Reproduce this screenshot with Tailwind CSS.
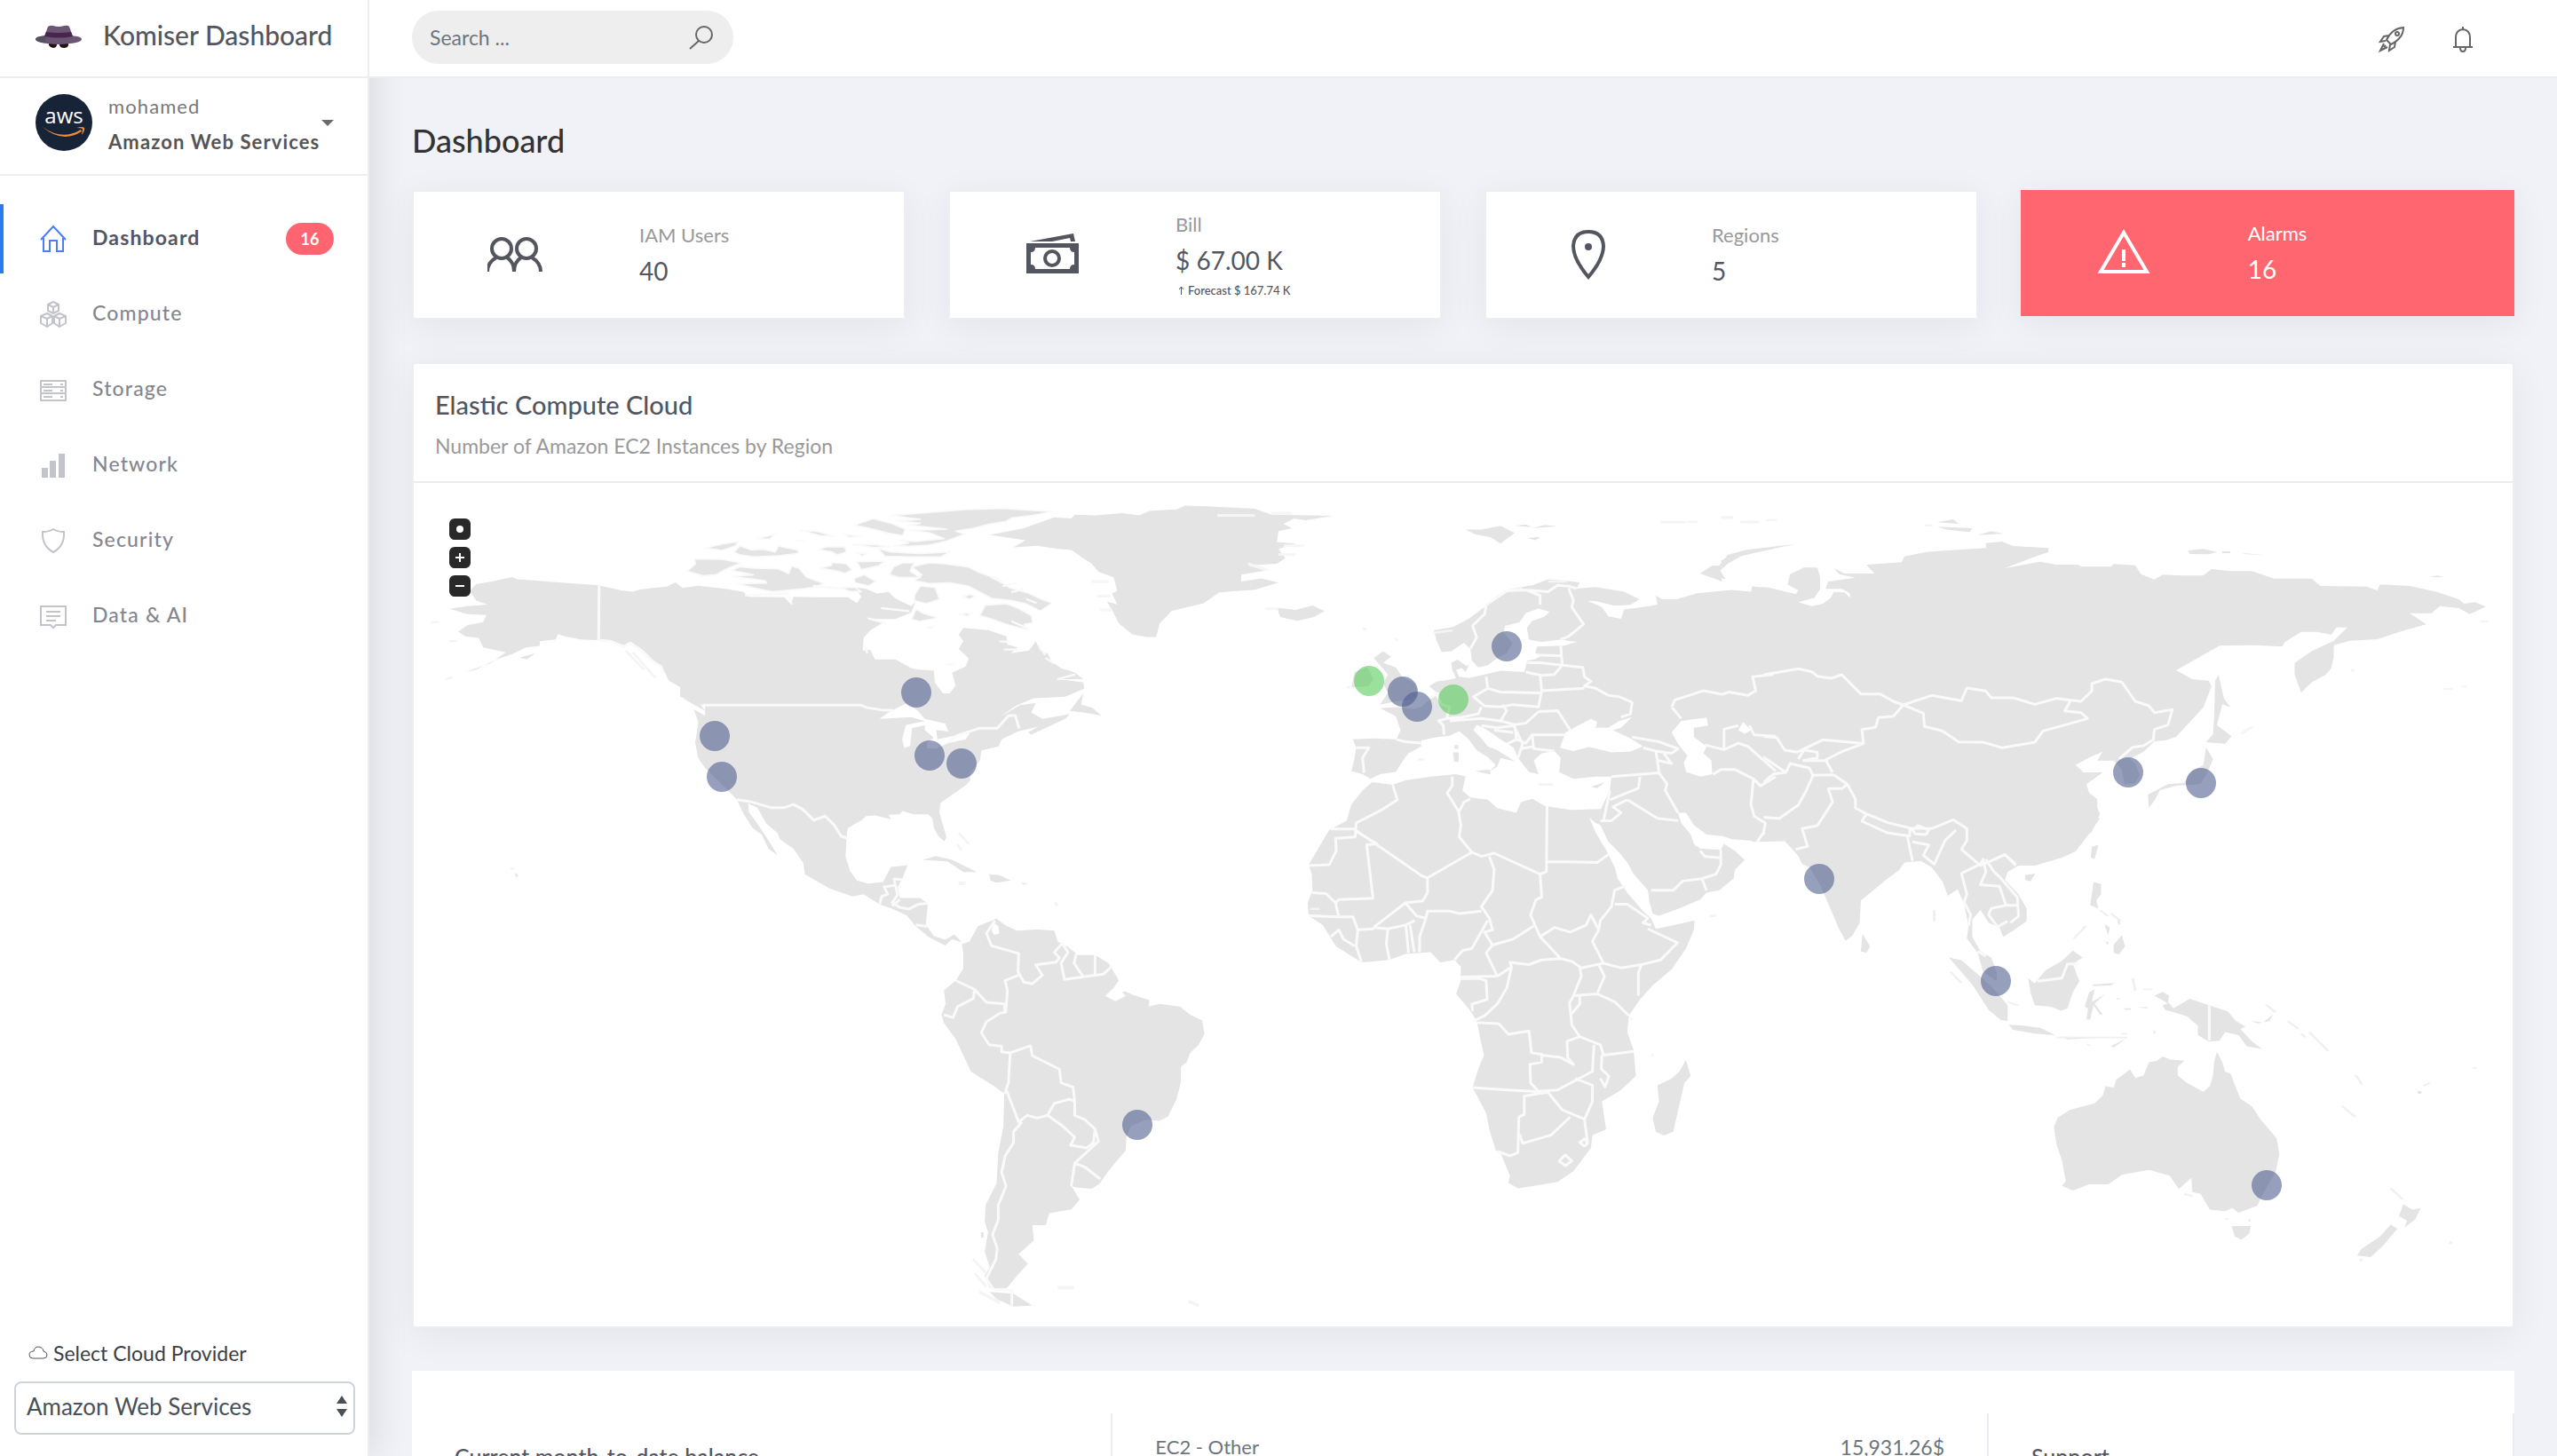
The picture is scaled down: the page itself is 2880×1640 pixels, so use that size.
<!DOCTYPE html>
<html lang="en">
<head>
    <meta charset="UTF-8">
    <meta name="viewport" content="width=device-width, initial-scale=1">
    <title>Komiser Dashboard</title>
    <script src="https://cdn.jsdelivr.net/npm/@tailwindcss/browser@4"></script>
</head>
<body class="flex h-screen overflow-hidden bg-[#f1f2f7] font-['Lato',sans-serif] text-[22px] text-[#54565f]">

<!-- sidebar -->
<aside class="relative z-10 flex w-[416px] shrink-0 flex-col border-r-2 border-[#eee] bg-white shadow-[8px_0_36px_rgba(0,0,0,0.09)]">
    <a href="#" class="flex h-[88px] shrink-0 items-center gap-6 border-b-2 border-[#eee] pb-1 pl-10 text-[30px] font-medium">
        <svg class="h-[26px] w-[52px]" viewBox="0 0 52 26">
            <path d="M15 18h9v5q-1 3-4 3t-5-3zM27 18h10v5q-1 3-5 3t-5-3z" fill="#23130f"/>
            <path d="M0 16q0-3 12-4h28q12 1 12 4 0 5-26 6-26-1-26-6z" fill="#6a5573"/>
            <path d="M0 16q0-3 12-4l-1 8q-11-1-11-4z" fill="#58505e"/>
            <path d="M10 13 14 2q3-2 6-1 6 2 12 0 5-1 6 1l4 11q-16 3-32 0z" fill="#6c5676"/>
            <path d="M12 8q14 2 28 0l2 5q-16 3-32 0z" fill="#46264f"/>
        </svg>
        <span class="pb-1">Komiser Dashboard</span>
    </a>

    <button type="button" class="flex h-[110px] shrink-0 items-center border-b-2 border-[#eee] pb-2 pl-10 text-left">
        <svg class="size-16" viewBox="0 0 64 64">
            <circle cx="32" cy="32" r="32" fill="#172337"/>
            <text x="32" y="33" text-anchor="middle" font-family="Open Sans, sans-serif" font-size="24" font-weight="500" fill="#fff">aws</text>
            <path d="M8 37q22 16 43 3l1 2q-22 14-44-5z" fill="#ee8c37"/>
            <path d="M46 38q7-2 9 0 1 3-3 8 1-4 1-7-2-1-7-1z" fill="#ee8c37"/>
        </svg>
        <span class="ml-[18px] w-[236px] pt-1 whitespace-nowrap">
            <span class="block leading-10 tracking-wider text-[#777]">mohamed</span>
            <span class="block leading-10 font-bold tracking-wider text-[#555]">Amazon Web Services</span>
        </span>
        <svg class="ml-1 h-[7px] w-[14px]" viewBox="0 0 14 7"><path d="M0 0h14L7 7z" fill="#6b6b6b"/></svg>
    </button>

    <nav class="mt-8 flex flex-col gap-[7px] text-[23px] tracking-wider text-[#85868e]">
        <a href="#" class="flex h-[78px] items-center border-l-4 border-[#2979f2] pr-[38px] pl-10 font-bold text-[#54565f]">
            <svg class="size-8" viewBox="0 0 32 32" fill="none" stroke="#4a7dfb" stroke-width="2">
                <path d="M2 17 16 2l14 15M5 15v15h7V18h8v12h7V15"/>
            </svg>
            <span class="ml-7 grow pb-1">Dashboard</span>
            <span class="flex h-9 w-[54px] items-center justify-center rounded-full bg-[#ff6470] text-[18px] tracking-normal text-white">16</span>
        </a>
        <a href="#" class="flex h-[78px] items-center pl-11 font-medium">
            <svg class="size-8" viewBox="0 0 32 32" fill="none" stroke="#c3c4ca" stroke-width="2" stroke-linejoin="round">
                <path d="M16 2l6 3v7l-6 3-6-3V5zM10 5l6 3 6-3M16 8v7"/>
                <path d="M9 15l6 3v8l-6 4-7-4v-8zM2 18l7 3 6-3M9 21v9"/>
                <path d="M23 15l7 3v8l-7 4-6-4v-8zM17 18l6 3 7-3M23 21v9"/>
            </svg>
            <span class="ml-7 pb-1">Compute</span>
        </a>
        <a href="#" class="flex h-[78px] items-center pl-11 font-medium">
            <svg class="size-8" viewBox="0 0 32 32" fill="none" stroke="#c3c4ca" stroke-width="2">
                <path d="M2 6h28v22H2zM2 13h28M2 20h28"/>
                <path d="M5 10h10M24 10h3M5 17h10M24 17h3M5 24h10M24 24h3"/>
            </svg>
            <span class="ml-7 pb-1">Storage</span>
        </a>
        <a href="#" class="flex h-[78px] items-center pl-11 font-medium">
            <svg class="size-8" viewBox="0 0 32 32" fill="#c3c4ca">
                <path d="M3 19h7v11H3zM12 11h7v19h-7zM22 3h7v27h-7z"/>
            </svg>
            <span class="ml-7 pb-1">Network</span>
        </a>
        <a href="#" class="flex h-[78px] items-center pl-11 font-medium">
            <svg class="size-8" viewBox="0 0 32 32" fill="none" stroke="#c3c4ca" stroke-width="2">
                <path d="M4 6q7 0 12-3 5 3 12 3 1 16-12 23Q3 22 4 6z"/>
            </svg>
            <span class="ml-7 pb-1">Security</span>
        </a>
        <a href="#" class="flex h-[78px] items-center pl-11 font-medium">
            <svg class="size-8" viewBox="0 0 32 32" fill="none" stroke="#c3c4ca" stroke-width="2">
                <path d="M2 5h28v21H19l-3 3-3-3H2z"/>
                <path d="M8 11h16M8 16h16M8 21h11"/>
            </svg>
            <span class="ml-7 pb-1">Data &amp; AI</span>
        </a>
    </nav>

    <div class="mt-auto pr-[14px] pb-6 pl-4">
        <label for="provider" class="flex items-center gap-[6px] pb-4 pl-4 text-[23px] leading-8 text-[#3c3e45]">
            <svg class="h-4 w-[22px]" viewBox="0 0 22 16" fill="none" stroke="#54565f">
                <path d="M5 14h12q4 0 4-4 0-3-4-4Q16 1 11 1 7 1 6 6 1 6 1 10q0 4 4 4z"/>
            </svg>
            Select Cloud Provider
        </label>
        <div class="relative">
            <select id="provider" class="h-[60px] w-full appearance-none rounded-lg border-2 border-[#ced4da] bg-white pb-1 pl-3 text-[26px] text-[#495057]">
                <option>Amazon Web Services</option>
                <option>Google Cloud Platform</option>
            </select>
            <svg class="pointer-events-none absolute top-4 right-2 h-6 w-[14px]" viewBox="0 0 14 24">
                <path d="M7 0l6 9H1zM7 24l6-9H1z" fill="#495057"/>
            </svg>
        </div>
    </div>
</aside>

<div class="flex min-w-0 grow flex-col">
    <!-- top bar -->
    <header class="relative z-20 flex h-[88px] shrink-0 items-center justify-between border-b-2 border-[#eee] bg-white pr-[90px] pb-[2px] pl-12">
        <label class="flex h-[60px] w-[362px] items-center rounded-full bg-[#eee] pr-[22px] pl-5">
            <input type="text" aria-label="Search" placeholder="Search ..." class="min-w-0 grow bg-transparent text-[23px] outline-none placeholder:text-[#6c757d]">
            <svg class="size-7" viewBox="0 0 28 28" fill="none" stroke="#666" stroke-width="2">
                <circle cx="17" cy="11" r="9"/><path d="M11 18 1 27"/>
            </svg>
        </label>
        <div class="flex items-center gap-12 pt-1">
            <button type="button" aria-label="What's new">
                <svg class="size-8" viewBox="0 0 32 32" fill="none" stroke="#666" stroke-width="2">
                    <path d="M10 17Q16 4 29 3q0 12-14 19zM10 17l5 5M13 12l-6 1-4 6 6-1M20 19l-1 6-6 4 1-7"/>
                    <circle cx="22" cy="10" r="2"/>
                    <path d="M7 21l-4 8 8-4M7 25l2-2"/>
                </svg>
            </button>
            <button type="button" aria-label="Notifications">
                <svg class="size-8" viewBox="0 0 32 32" fill="none" stroke="#666" stroke-width="2">
                    <path d="M5 25h22M8 25V14q0-8 8-9 8 1 8 9v11M13 26q0 4 3 4t3-4M16 2v3"/>
                </svg>
            </button>
        </div>
    </header>

    <main class="grow px-12 pt-[50px]">
        <h1 class="text-[36px] leading-[40px] font-medium text-[#333]">Dashboard</h1>

        <div class="mt-9 grid grid-cols-4 items-start gap-12">
            <div class="flex h-[146px] items-center border-2 border-[#eee] bg-white shadow-[0_8px_40px_rgba(0,0,0,0.06)]">
                <div class="flex w-5/12 justify-center">
                    <svg class="h-[60px] w-16" viewBox="2 0 64 60" fill="none" stroke="#54565f" stroke-width="4">
                        <circle cx="18" cy="23" r="11"/><circle cx="46" cy="23" r="11"/>
                        <path d="M2 49q0-10 10-16M24 33q8 5 8 16 0-11 8-16M52 33q10 6 10 16"/>
                    </svg>
                </div>
                <div class="pl-6">
                    <div class="leading-9 text-[#999]">IAM Users</div>
                    <div class="text-[28px] leading-[44px]">40</div>
                </div>
            </div>
            <div class="flex h-[146px] items-center border-2 border-[#eee] bg-white shadow-[0_8px_40px_rgba(0,0,0,0.06)]">
                <div class="flex w-5/12 justify-center">
                    <svg class="h-[60px] w-16" viewBox="0 0 64 60" fill="#54565f">
                        <path d="M7 15 56 6l2 9h-5l-1-4-20 4z"/>
                        <path fill-rule="evenodd" d="M3 17h59v34H3zM13 22q0 5-5 5v14q5 0 5 5h39q0-5 5-5V27q-5 0-5-5z"/>
                        <circle cx="32" cy="34" r="8" fill="none" stroke="#54565f" stroke-width="4"/>
                    </svg>
                </div>
                <div class="pl-6">
                    <div class="leading-9 text-[#999]">Bill</div>
                    <div class="text-[28px] leading-[44px]">$ 67.00 K</div>
                    <div class="flex items-center gap-1 pl-[3px] text-[13px] leading-6 font-medium">
                        <svg class="h-[10px] w-[7px]" viewBox="0 0 7 10" fill="none" stroke="#54565f"><path d="M3.500 10V1M1 4l2.500-3L6 4"/></svg>
                        Forecast $ 167.74 K
                    </div>
                </div>
            </div>
            <div class="flex h-[146px] items-center border-2 border-[#eee] bg-white shadow-[0_8px_40px_rgba(0,0,0,0.06)]">
                <div class="flex w-5/12 justify-center">
                    <svg class="h-[60px] w-16" viewBox="0 0 64 60" fill="none" stroke="#54565f" stroke-width="4">
                        <path d="M32 55Q15 35 15 20q1-16 17-16t17 16q0 15-17 35z"/>
                        <circle cx="32" cy="21" r="4" fill="#54565f" stroke="none"/>
                    </svg>
                </div>
                <div class="pl-6">
                    <div class="leading-9 text-[#999]">Regions</div>
                    <div class="text-[28px] leading-[44px]">5</div>
                </div>
            </div>
            <div class="flex h-[142px] items-center bg-[#ff6670] text-white shadow-[0_8px_40px_rgba(0,0,0,0.06)]">
                <div class="flex w-5/12 justify-center">
                    <svg class="h-[60px] w-16" viewBox="0 0 64 60" fill="none" stroke="#fff" stroke-width="4">
                        <path d="M32 7 58 51H6zM32 26v13M32 41v5"/>
                    </svg>
                </div>
                <div class="pl-6">
                    <div class="leading-9">Alarms</div>
                    <div class="text-[28px] leading-[44px]">16</div>
                </div>
            </div>
        </div>

        <!-- EC2 instances map -->
        <section class="mt-12 border-2 border-[#eee] bg-white shadow-[0_8px_40px_rgba(0,0,0,0.06)]">
            <div class="border-b-2 border-[#ebecf2] p-6">
                <h2 class="text-[29px] leading-[44px] font-medium">Elastic Compute Cloud</h2>
                <p class="mt-2 text-[23px] leading-8 text-[#999]">Number of Amazon EC2 Instances by Region</p>
            </div>
            <div class="relative">
                <div class="absolute top-10 left-10 flex flex-col gap-2">
                    <button type="button" aria-label="Reset" class="flex size-6 items-center justify-center rounded-md bg-[#292929]"><span class="size-2 rounded-full bg-white"></span></button>
                    <button type="button" aria-label="Zoom in" class="flex size-6 items-center justify-center rounded-md bg-[#292929]">
                        <svg class="size-[10px]" viewBox="0 0 10 10" stroke="#fff" stroke-width="2"><path d="M5 0v10M0 5h10"/></svg>
                    </button>
                    <button type="button" aria-label="Zoom out" class="flex size-6 items-center justify-center rounded-md bg-[#292929]">
                        <svg class="size-[10px]" viewBox="0 0 10 10" stroke="#fff" stroke-width="2"><path d="M0 5h10"/></svg>
                    </button>
                </div>
                <svg class="block w-full" viewBox="466 544 2364 950" fill="#e4e4e4" stroke-linejoin="round">
                    <!-- north america -->
                    <g transform="translate(460 540) scale(.5102 .35714)">
                        <path d="M135 352 150 330 185 322 205 315 230 308 240 315 270 318 330 325 415 333 440 340 470 350 495 354 510 348 540 342 570 338 590 325 605 342 640 335 700 345 740 355 750 370 830 372 845 395 850 370 900 372 970 372 990 390 1000 370 985 340 1010 345 1035 360 1060 355 1075 375 1110 400 1120 385 1110 420 1075 440 1020 440 1050 450 1020 475 1005 500 1003 540 1020 538 1030 568 1075 568 1110 595 1125 600 1160 603 1162 640 1180 675 1195 675 1208 650 1200 610 1230 590 1237 565 1215 535 1225 510 1215 490 1225 468 1280 475 1320 495 1322 520 1345 530 1330 548 1370 540 1385 510 1395 540 1412 550 1420 575 1440 595 1470 608 1490 630 1432 630 1490 640 1492 660 1450 685 1380 690 1340 715 1305 750 1350 712 1385 705 1375 735 1400 755 1460 740 1450 755 1420 775 1375 805 1368 798 1390 780 1345 795 1310 820 1303 842 1265 855 1262 885 1250 910 1240 925 1240 950 1230 965 1205 990 1175 1020 1172 1050 1180 1090 1188 1130 1183 1142 1170 1125 1160 1100 1157 1070 1148 1056 1115 1056 1090 1046 1085 1056 1060 1058 1065 1072 1030 1060 1010 1062 1000 1075 970 1100 967 1130 965 1190 975 1235 990 1265 1015 1275 1048 1270 1065 1222 1102 1217 1090 1260 1080 1285 1085 1320 1130 1320 1147 1338 1142 1405 1160 1440 1185 1452 1205 1435 1222 1460 1200 1450 1185 1470 1150 1445 1120 1410 1100 1375 1070 1355 1040 1340 1005 1308 980 1315 930 1290 875 1245 872 1210 850 1165 820 1135 815 1115 790 1085 770 1035 750 1022 752 1050 775 1095 800 1150 815 1185 795 1165 780 1120 760 1100 740 1055 725 1010 705 980 655 910 640 880 633 830 640 765 630 725 655 745 655 715 600 685 600 655 575 635 560 590 520 550 490 520 470 525 445 508 420 507 380 505 345 495 330 488 325 505 290 510 290 525 260 530 230 550 190 570 150 600 125 608 180 580 215 545 165 530 155 500 125 495 110 480 130 460 165 450 172 428 130 425 90 408 130 400 175 395 150 382Z"/>
                        <path d="M1460 730 1490 675 1485 710 1510 720 1530 745 1490 735ZM605 690 640 700 655 730 630 710ZM245 562 280 548 262 568ZM520 625 540 640 530 632ZM235 1240 243 1250 237 1256ZM1135 1200 1165 1188 1200 1200 1255 1238 1225 1238 1190 1205ZM1282 1245 1305 1248 1330 1265 1298 1272 1285 1265ZM1213 1272 1230 1275 1220 1280ZM1352 1272 1368 1275 1358 1278Z"/>
                        <path d="M50 450h18M90 510h18M82 630l16-6M480 540l40 60M495 545l50 80M1215 1115l22 35M1212 1150l8 20M225 1225l8 5M1430 1335v8" fill="none" stroke="#f4f4f4" stroke-width="6"/>
                        <path d="M1040 755 1060 735 1100 705 1125 730 1140 755 1185 770 1192 795 1165 790 1168 820 1200 810 1240 800 1230 820 1190 832 1165 850 1145 848 1145 830 1160 815 1140 790 1140 775 1112 785 1108 840 1095 848 1090 820 1098 775 1140 762 1110 750Z" fill="#fff"/>
                        <path d="M421 335 420 507 445 510 475 527 490 516 515 540 540 575 558 590 562 610M650 712H1000L1012 720 1045 727 1070 728M1190 830 1210 808 1260 785 1300 785 1325 745 1340 745 1348 785M725 1010 760 1018 800 1035 830 1035 850 1025 870 1040 895 1075 920 1062 940 1090 955 1125 970 1132M1040 1340 1045 1315 1058 1308 1050 1285 1075 1280 1072 1260 1090 1262M1075 1280 1080 1310 1068 1335 1085 1350 1105 1355 1125 1340 1147 1337M1085 1325 1068 1345M1120 1405 1145 1410" fill="none" stroke="#fafafa" stroke-width="3" vector-effect="non-scaling-stroke"/>
                    </g>

                    <!-- canadian arctic -->
                    <g transform="translate(770 560) scale(.33333)" stroke="#fafafa" stroke-width="5">
                        <path d="M12 250 40 225 35 208 130 210 195 222 150 240 110 262 65 266ZM180 292 280 290 275 282 215 275 160 268 235 262 160 248 190 235 240 240 320 242 355 258 365 232 390 240 415 270 475 292 440 305 400 310 300 320 240 308ZM70 172 130 158 185 150 175 165 130 180ZM170 185 190 165 230 178 270 176 310 185 320 165 385 178 390 190 320 198 240 202 190 195ZM245 140 310 125 290 142ZM395 112 450 115 510 132 460 130ZM380 145 410 148ZM455 178 480 168 545 168 550 185 520 195 500 185ZM460 240 500 230 500 220 550 225 570 245 545 258 520 250ZM585 218 680 216 660 232 600 245ZM575 275 610 262 650 285 625 300 580 290ZM530 305 580 305 600 320 560 318ZM585 190 620 190 605 200ZM540 125 600 132 560 136ZM575 95 640 72 700 88 750 108 740 130 690 122 640 108ZM570 160 650 160 700 168 640 170ZM655 172 700 185 800 190 900 185 870 202 760 202 680 200ZM710 165 760 155 730 145 780 150 880 140 830 120 760 112 890 108 760 95 800 88 720 80 800 75 700 62 780 55 850 50 950 42 1080 38 1180 45 1250 48 1180 62 1110 70 1090 82 1030 92 980 105 920 115 950 125 890 148 830 162 760 166Z"/>
                        <path d="M695 262 710 235 740 222 780 222 765 250 800 272 730 272ZM770 235 830 222 880 225 960 235 1000 255 1060 275 1100 305 1160 322 1210 345 1245 358 1205 385 1160 362 1110 350 1040 342 1000 320 960 300 900 290 830 292 780 282 805 262ZM780 330 800 300 850 305 865 345 820 360 780 350ZM770 412 785 378 810 392 860 408 795 420ZM945 335 970 328 985 336 965 345ZM930 395 975 390 960 402ZM1000 400 1020 365 1090 360 1130 375 1175 400 1180 425 1150 430 1165 450 1090 430 1040 412ZM820 440 845 435 835 444Z"/>
                        <path d="M670 375 760 385M625 410 680 425M210 332 350 325 365 360M1110 420 1165 445M440 300 540 310M610 500l10 25M890 565h25M1070 488h30M1085 515h40M1265 615l55-15M1200 500l20 30M1225 545l25 15M1040 270l40 20M1080 300l45-10M1110 320l35-8M1160 345l30 12" fill="none" stroke-width="7" stroke-linecap="round"/>
                    </g>

                    <!-- greenland and south america -->
                    <g transform="translate(1000 540) scale(.38265 .61224)">
                        <path d="M300 102 400 90 490 70 540 72 550 65 610 66 690 62 740 66 770 58 850 55 875 48 950 50 1080 54 1130 65 1310 67 1230 75 1195 72 1165 82 1190 90 1150 95 1145 115 1200 118 1150 128 1170 145 1145 155 1060 158 1110 168 1040 175 1040 188 1100 182 1150 190 1080 203 975 208 930 228 880 235 835 242 800 265 790 290 760 290 720 285 680 265 660 240 645 225 675 230 660 210 675 205 665 180 620 170 600 155 575 145 540 130 500 128 440 122 370 125 405 112ZM1145 236 1200 240 1250 232 1285 242 1255 253 1205 260 1155 253Z"/>
                        <path d="M600 188h50M615 215h40M625 240h35M1165 122h60M1150 138h50M1130 62h60M1110 238h40M970 66h110M1060 155l60 12" fill="none" stroke="#f6f6f6" stroke-width="5"/>
                        <path d="M218 855 240 850 265 822 320 808 345 820 380 830 440 828 490 830 500 850 530 860 560 875 610 875 650 890 680 922 665 935 640 950 700 942 720 948 770 958 768 970 800 965 860 970 890 985 925 995 932 1020 915 1040 890 1055 880 1072 863 1080 862 1110 850 1140 825 1172 800 1180 760 1178 715 1190 702 1210 700 1235 665 1260 640 1280 625 1295 600 1305 560 1303 540 1300 565 1325 540 1343 475 1350 465 1372 425 1372 430 1400 385 1425 412 1443 380 1465 350 1488 300 1488 285 1465 300 1450 285 1420 295 1385 285 1365 288 1335 320 1295 325 1240 340 1190 343 1130 310 1115 245 1090 200 1030 165 1000 158 985 170 965 165 940 200 922 222 900 222 870ZM300 1495 370 1498 425 1520 370 1522 320 1508ZM520 1486h20v3h-20ZM274 1385h8v10h-8Z"/>
                        <path d="M250 1435 290 1460M255 1460 290 1485M270 1495 330 1515M500 1487h48M885 1512l30 8M208 743h20M492 778l8 6" fill="none" stroke="#f4f4f4" stroke-width="6"/>
                        <path d="M310 815 325 822 328 835 312 838 306 830ZM640 950 680 938 700 950 670 960Z" fill="#fff"/>
                        <path d="M315 812 290 835 305 858 345 865 385 872 383 905 400 925 425 928 455 912 435 893 495 888 505 880 490 870 515 852M385 912 345 922 352 940 347 980 330 982 290 998 275 1018 298 1040 335 1043 335 1053 360 1055 420 1042 425 1060 505 1085 510 1110 545 1118 550 1145 550 1170 580 1178 610 1195 605 1220 585 1230 538 1225 550 1210 515 1190 470 1170 440 1175 410 1170 385 1182 350 1125 343 1130M200 922 255 938 290 962 342 965 345 980M255 938 252 955 205 970 192 990 165 985M360 1055 355 1110 345 1128M470 1170 490 1148 535 1140 550 1145M610 1195 620 1218 550 1258 540 1300M550 1258 580 1265 625 1287M395 1182 370 1200 370 1220 345 1245 335 1275 348 1300 325 1335 325 1362 308 1390 322 1415 318 1435 290 1470 310 1490 365 1492V1520M515 855 530 870 510 890 520 920 575 915 635 910 660 895M555 872 548 890 575 915M610 875V910" fill="none" stroke="#fafafa" stroke-width="3" vector-effect="non-scaling-stroke"/>
                    </g>

                    <!-- south asia and oceania -->
                    <g transform="translate(1900 900) scale(.61224 .35714)">
                        <path d="M120 60V135L180 133 195 160 205 180 212 205 225 215 245 270 265 350 280 410 292 447 305 430 318 390 320 320 370 250 390 225 400 200 430 195 450 215 470 260 480 305 498 285 510 330 518 400 515 440 535 485 545 545 570 575 570 545 560 500 540 480 525 435 525 380 540 350 555 390 575 405 582 435 600 415 625 385 625 345 610 300 585 255 590 230 610 210 640 210 690 185 715 165 740 110 760 60Z"/>
                        <path d="M323 425 337 465 330 485 320 480ZM745 150 757 145 750 190 743 185ZM622 240 641 235 632 260 622 255ZM482 500 505 508 540 560 565 600 590 650 590 700 578 698 555 665 525 585ZM592 712 620 715 650 722 678 745 640 740 600 728ZM628 565 640 582 660 540 690 510 710 478 728 500 710 520 722 575 710 610 700 660 688 668 670 655 640 650 632 610ZM748 262 762 268 762 300 753 320 757 345 742 335ZM785 460 800 430 806 465 795 490 785 485ZM768 395 778 405 775 430ZM790 372l8 20-3 5ZM770 450 776 452 773 460ZM745 585 785 580 790 575 780 588 748 590ZM740 610 750 600 745 640 770 615 750 645 765 680 760 680 748 650 742 695 735 695 738 660 732 655ZM860 620 875 608 887 620 885 640 895 660 925 630 995 670 1010 700 1028 718 1018 725 1040 765 1058 788 1030 780 1015 745 990 735 980 762 960 765 940 745 940 715 920 685 895 672 880 665 875 650 885 645ZM1040 700 1060 705 1078 680 1072 700 1050 708ZM830 655l20 2-5 4ZM805 660h12v4h-12ZM780 780 808 755 800 765 785 783ZM735 770 745 780 738 776ZM690 750 770 752 700 758ZM1105 698 1115 718ZM1300 1235l12 20Z"/>
                        <path d="M975 797 985 830 990 860 1000 865 1010 910 1018 945 1040 970 1055 1010 1085 1070 1090 1120 1083 1175 1055 1260 1050 1282 1015 1305 1003 1290 990 1300 962 1295 945 1245 930 1240 928 1195 905 1230 888 1188 850 1170 800 1185 775 1215 740 1215 710 1235 690 1220 697 1205 690 1140 680 1090 675 1035 682 1005 705 980 750 960 765 935 770 905 785 910 790 885 815 853 825 880 840 872 850 830 865 825 875 812 890 822 915 825 903 845 903 872 920 895 950 923 962 905 968 870 970 830ZM1002 1347 1037 1347 1035 1370 1020 1390 1008 1380ZM1318 1278 1335 1295 1350 1290 1340 1325 1320 1352 1325 1330 1310 1315ZM1295 1342 1307 1355 1280 1410 1258 1445 1233 1440 1240 1420 1275 1380ZM1345 920l7 3-2 7-6-2Z"/>
                        <path d="M455 350v35M485 545l20 35M712 440l22-40M760 350l15 20M780 360l18 25M820 565l5 40M1065 648l18 25M1130 740l8 12M1145 735l35 60M1105 700l20 25M1230 870l12 30M1205 968l25 35M1355 905l12-10M1445 848h8M1405 1395v8M1295 1228l22 35M1240 1450v8M990 1325h5M1035 1325v8M860 730v10M590 640l20 12M840 600h15M790 630h6M680 752h130M800 740h10M915 1245l15 8" fill="none" stroke="#f0f0f0" stroke-width="5"/>
                        <path d="M540 205 505 235 515 300 510 325 522 365 518 400M540 205 545 190 550 230 540 270 575 275 587 335 560 345 555 365 570 400M550 190 565 230 575 245 608 310 610 370 595 390M587 335 610 335M565 190 585 175 605 210M645 575 690 565 700 520 720 520M961 650V762M590 385 570 405M535 480 550 495" fill="none" stroke="#fafafa" stroke-width="3" vector-effect="non-scaling-stroke"/>
                    </g>

                    <!-- east asia and siberia -->
                    <g transform="translate(1900 540) scale(.61224 .33333)">
                        <path d="M120 1205V362L150 365 200 388 205 375 185 355 190 320 215 298 240 298 245 330 245 370 235 400 205 415 230 428 250 420 265 400 270 380 290 382 300 400 300 385 285 370 255 370 260 345 310 332 280 320 270 300 290 318 345 318 330 288 395 280 400 260 440 245 480 240 550 232 550 215 580 210 600 225 665 232 665 245 630 268 585 300 650 278 680 288 720 288 725 295 780 295 785 286 825 290 835 320 860 338 875 322 910 325 950 325 965 303 1000 310 1040 310 1080 335 1150 335 1165 360 1250 362 1270 375 1275 355 1330 360 1380 380 1420 405 1430 420 1450 415 1470 430 1440 455 1420 435 1385 428 1370 452 1330 452 1360 490 1320 510 1270 540 1220 545 1190 560 1190 600 1185 640 1175 660 1150 685 1130 720 1118 660 1118 620 1150 580 1190 545 1215 500 1195 500 1185 525 1160 515 1130 515 1100 550 1095 565 1040 560 980 562 900 645 930 675 960 680 965 700 950 770 900 870 880 882 860 885 840 920 815 945 825 960 833 1000 825 1025 805 1030 800 980 785 950 755 950 765 920 740 940 715 965 730 990 765 990 735 1030 740 1060 755 1080 755 1110 760 1130 745 1190 735 1205ZM65 345 25 318 45 295 60 290 75 255 110 238 200 218 150 238 110 248 75 285 60 310ZM460 145 490 135 500 150ZM460 160 525 165 520 178 480 170ZM535 188 560 175 583 184ZM922 240 950 235 975 245 960 253 925 252ZM985 243h15v6h-15ZM1020 248 1060 255 1030 253ZM1365 330 1380 325 1392 330ZM978 660 988 740 1000 770 985 760 975 830 1002 868 990 893 955 888 968 860 970 800 972 680ZM955 905 968 945 955 1000 945 1030 900 1035 870 1050 862 1080 850 1110 848 1065 885 1030 915 1025 930 985 950 965Z"/>
                        <path d="M0 143h20M65 130h20M105 143h20M145 137h20M437 155h15M1020 860l20-25M1390 708h18M1425 700h10M1460 480h15M1225 640v10" fill="none" stroke="#f4f4f4" stroke-width="6"/>
                        <path d="M0 725 10 712 40 715 55 728 110 730 125 715 115 705 125 685 125 665 205 640 230 650 240 665 265 672 285 660 320 725 355 725 380 750 398 762 450 730 505 748 515 705 550 715 560 738 600 738 640 760 680 740 725 750 745 715 745 690 770 675 800 685 825 750 850 765 860 788 893 778 885 830 860 845 858 880 840 900 820 905 795 945M398 762 435 790 437 835 470 850 500 887 545 888 580 907 640 888 655 850 695 830 737 808 725 788 695 782 705 750M398 762 380 800 352 805 347 838 322 845 325 892 285 920 255 948 268 990M322 892 250 880 205 920M68 908V840L105 825 120 865 165 872 180 915 205 922M35 900 60 912 68 908 95 885 130 925 182 990 160 995 135 1032 115 1000 75 978 50 982M205 945 215 915 240 922 240 940 215 950 260 950M182 990 190 960 225 975 232 1000 270 998M120 1010 118 1075 128 1110 122 1140 170 1145 205 1100 220 1050 232 1000M270 998 295 1030 310 1080 310 1110 330 1130 370 1160 410 1178 450 1180 490 1150 515 1180 515 1220 505 1250 540 1305 585 1268 605 1300M295 1030 285 1045 260 1045 268 1090 240 1170 212 1180 222 1240 200 1250M330 1130 322 1155 370 1195 410 1205V1178M122 1140 142 1195 130 1225M415 1185 425 1170 445 1185 440 1200 420 1198ZM405 1200 415 1290M415 1225 445 1235 435 1270 455 1300 475 1220 495 1185" fill="none" stroke="#fafafa" stroke-width="3" vector-effect="non-scaling-stroke"/>
                        <path d="M92 840 108 815 118 850 100 862Z" fill="#fff"/>
                    </g>

                    <!-- europe, middle east and africa -->
                    <g transform="translate(1440 540) scale(.35714 .52297)">
                        <path d="M490 325 500 350 515 372 545 370 585 352 605 365 610 390 630 405 660 400 690 385 720 375 738 352 710 330 715 315 760 308 780 288 820 278 855 285 840 295 800 305 783 320 790 345 830 350 890 345 940 350 900 358 815 360 810 375 835 378 805 388 785 390 775 415 700 412 650 420 600 428 570 425 560 410 595 403 565 388 545 395 548 410 560 428 535 432 500 435 475 445 500 460 450 490 425 495 380 490 320 493 370 510 385 540 372 560 300 558 235 560 245 578 240 600 230 628 265 635 290 645 320 635 370 630 390 608 410 590 450 575 450 562 500 555 540 552 570 542 600 560 625 583 660 598 685 615 665 630 690 618 700 600 745 607 690 583 660 575 640 558 615 540 625 528 645 535 670 545 700 560 742 578 755 600 790 630 820 635 805 605 830 590 870 585 890 600 885 630 930 645 1000 640 1050 640 1045 670 1015 712 1010 740 1018 748 1040 780 1070 800 1100 825 1120 850 1165 885 1170 910 1180 935 1200 940 1260 925 1330 905 1350 890 1390 885 1435 860 1440 840 1470 820 1440 800 1405 785 1395 798 1330 795 1310 785 1300 765 1270 740 1260 718 1285 718 1310 745 1350 765 1400 768 1430 775 1530 780V235L1495 230 1490 242 1430 238 1320 245 1255 258 1210 258 1190 250 1195 270 1150 275 1090 280 1080 300 1040 295 1020 275 975 262 1000 262 1060 272 1110 270 1138 258 1090 242 1000 232 940 235 950 222 900 218 850 215 800 228 740 235 690 250 650 275 600 300 550 318Z"/>
                        <path d="M295 652 360 658 400 648 480 640 560 635 590 640 580 670 605 685 660 690 690 708 750 718 765 695 800 688 840 703 920 712 1015 710 1018 745 1000 740 980 728 1000 760 1035 800 1060 835 1070 860 1100 890 1150 930 1175 945 1190 968 1260 958 1312 950 1310 970 1285 1010 1240 1055 1180 1090 1140 1120 1105 1155 1100 1190 1120 1230 1127 1285 1080 1315 1020 1340 1033 1400 990 1412 985 1440 930 1490 880 1513 820 1520 755 1527 725 1515 730 1500 700 1450 685 1445 665 1400 655 1365 612 1310 630 1270 648 1240 638 1210 625 1165 600 1140 560 1108 575 1080 575 1050 555 1035 510 1040 480 1018 400 1022 350 1035 262 1040 180 1005 140 960 95 940 92 912 107 885 105 850 95 830 160 755 215 735 230 700 265 670ZM1285 1250 1300 1285 1280 1300 1245 1405 1215 1413 1190 1405 1180 1375 1200 1340 1195 1305 1240 1290 1265 1275ZM300 385 330 370 355 382 330 395 370 405 390 425 430 440 440 465 420 475 370 478 320 485 345 460 330 440 345 420 320 400ZM240 415 280 405 300 430 285 445 230 448ZM590 108 640 108 700 100 745 115 700 138 670 125 620 118ZM745 100 780 97 800 103ZM800 105 840 98 880 101ZM785 126 825 124 810 131ZM1330 202 1370 185 1400 188 1395 175 1450 158 1568 148 1460 165 1410 180 1392 195 1410 215 1370 208ZM555 572h12v8h-12ZM550 588h18v20h-14ZM620 628 665 625 670 636ZM985 662 1030 652 1005 665ZM575 405 600 400 590 415Z"/>
                        <path d="M1205 92h80M1395 82h40M1455 92h60M265 322h12M368 345h8M440 603h18M820 657h45M1360 940h20M1110 1162h8M1175 1240h8M215 448h12M95 940h40M100 925h30M490 330l60-5M720 240l50-5M850 220h60" fill="none" stroke="#f4f4f4" stroke-width="5"/>
                        <path d="M888 578 905 545 950 528 985 516 1005 522 1000 535 1040 535 1075 520 1115 512 1080 535 1055 540 1110 558 1150 575 1110 586 1050 588 980 576 930 585ZM1240 545 1270 520 1350 513 1355 530 1310 535 1310 555 1350 575 1340 590 1365 605 1368 635 1330 640 1285 630 1278 610 1290 595 1260 570ZM1315 775 1325 785 1315 790Z" fill="#fff"/>
                        <path d="M1450 540 1465 522 1490 540 1470 548Z" fill="#fff"/>
                        <!-- african borders -->
                        <path d="M360 658 375 690 330 710 245 740 242 770 180 773 182 800 160 830 95 832M242 755 455 855 470 858 610 803 570 770 575 745 568 715 532 675 548 660V640M570 715 585 695 605 688M165 753H242M245 758 310 785 278 787 298 902 190 905 180 912 150 892 105 890M610 803 640 812 680 805 825 850 845 845 847 703M847 823 1005 825 1040 808M825 850 830 900 812 905 795 938 825 985 870 965 920 975 970 960 985 938 1010 970 1015 950 1050 920 1060 885 1095 875M665 812 680 840 675 885 640 920 665 945 675 970 650 975 675 1003 740 990 805 962M470 858V890L455 908 400 912 300 965M400 912 435 940 465 945 470 930 540 930 570 935 640 930M300 965 345 968 400 960 430 950M180 912 190 942 95 940M190 942 235 942 250 970 300 968M250 970 245 1005 262 1040M165 985 190 970 205 990 240 1005M345 968 340 1000 350 1035M402 962 410 1020M415 960 428 1018M465 945 445 985V1018M555 1035 580 1015 610 1010 660 950M675 1003 655 1020 690 1070 575 1072M690 1070 735 1050 730 1040 790 1045 830 1035 890 1032 825 985M890 1032 925 1038 955 1052 1025 1042 990 995 1010 970M1025 1042 1080 1052 1145 1045 1205 1035 1258 998 1165 968M1060 915 1100 915 1165 945 1150 955 1175 960M1145 1045 1135 1062V1112M1010 1045 1028 1070 1005 1108 930 1112 955 1070 950 1050M1005 1108 1060 1125 1105 1155M930 1112 918 1128 925 1175 950 1200 1015 1218 1025 1240 1120 1232M925 1150 950 1130V1112M735 1050 720 1095 690 1130 650 1155 620 1165M575 1075 635 1075 655 1080 658 1120 610 1130 612 1145M625 1170 695 1172 725 1195 790 1188 798 1235 830 1238V1255L793 1260 795 1300 820 1318 880 1315 990 1275 995 1218M830 1240 890 1245 930 1260 912 1245 910 1210 950 1200M612 1310 725 1315 850 1320 775 1328V1368L758 1373 755 1450 730 1457 690 1447M850 1320 895 1358 965 1378 990 1340 990 1305 935 1290M760 1410 770 1430 860 1412 920 1373M965 1378 975 1430M1020 1240 1018 1270 1042 1285 1030 1308 1015 1290M885 1468 905 1455 925 1468 905 1478ZM950 1428 965 1420 975 1430 965 1436Z" fill="none" stroke="#fafafa" stroke-width="3" vector-effect="non-scaling-stroke"/>
                        <!-- european and middle eastern borders -->
                        <path d="M605 365 625 340 612 315 650 290 655 270 720 240 780 238 825 250 825 270M780 238 850 242 880 228 915 230 940 235M915 235 930 260 925 275 962 312 915 338 890 345M890 358 895 400 960 405 965 425 985 435 965 445 1000 450 1040 465 1075 468 1115 480 1110 505 1080 512M815 378 895 380M785 395 825 395 895 400 870 420 830 422 780 415M825 422 830 455 965 450M655 425 660 450 700 458 825 460M660 450 615 468 650 488 700 490 740 485 820 490 830 455M500 465 515 485 540 490 530 515 505 520 520 530 522 550M505 460 480 470M530 515 580 512 630 505 640 490M540 520 640 515 700 520 720 498 705 485M700 520 745 528 780 525 820 500M640 530 690 535 745 530 750 560 780 568 800 550 905 550M820 500 880 498 920 540M742 530 770 570 755 600M800 550 805 580 870 585M765 580 805 575M680 540 740 545M720 570 750 560M372 560 400 565 450 568M245 578 285 578 265 600 270 632M1115 555 1200 565 1260 580 1240 590 1190 585 1150 578M1190 585 1195 605 1200 632 1050 640M1195 605 1240 612 1215 590M1200 632 1225 655 1220 670 1260 718M1140 640 1135 665 1045 690M1100 690 1195 730 1260 735M1100 690 1055 705 1080 718 1050 735 1015 735M1045 670 1025 735M1175 885 1245 885 1275 865 1335 860 1380 850 1395 830 1395 798M1335 860 1350 885M1330 800 1345 812 1395 815M1370 635 1395 625 1440 625 1498 645 1490 700 1500 725 1535 740 1530 760 1510 780M1498 645 1520 660 1568 640M1345 572 1405 582V538L1450 530M1405 582 1450 568 1480 575 1568 628M1240 490 1250 475 1310 462 1340 455 1400 463 1420 458 1480 465 1505 455 1495 425 1560 420M1240 490 1270 515M1485 530 1500 550 1568 553" fill="none" stroke="#fafafa" stroke-width="3" vector-effect="non-scaling-stroke"/>
                    </g>

                    <!-- regions -->
                    <g fill="#506191" fill-opacity=".6">
                        <circle cx="1032" cy="780" r="17"/>
                        <circle cx="805" cy="829" r="17"/>
                        <circle cx="813" cy="875" r="17"/>
                        <circle cx="1047" cy="851" r="17"/>
                        <circle cx="1083" cy="860" r="17"/>
                        <circle cx="1281" cy="1267" r="17"/>
                        <circle cx="1580" cy="779" r="17"/>
                        <circle cx="1596" cy="796" r="17"/>
                        <circle cx="1697" cy="728" r="17"/>
                        <circle cx="2397" cy="870" r="17"/>
                        <circle cx="2479" cy="882" r="17"/>
                        <circle cx="2049" cy="990" r="17"/>
                        <circle cx="2248" cy="1105" r="17"/>
                        <circle cx="2553" cy="1335" r="17"/>
                    </g>
                    <g fill="#58cb5a" fill-opacity=".6">
                        <circle cx="1542" cy="767" r="17"/>
                        <circle cx="1637" cy="788" r="17"/>
                    </g>
                </svg>
            </div>
        </section>

        <!-- costs -->
        <section class="mt-12 grid grid-cols-12 bg-white pt-12 pb-12">
            <div class="col-span-4 border-r-2 border-[#ebecf2] px-12 pt-[30px]">
                <h3 class="text-[25px] leading-9 font-medium">Current month-to-date balance</h3>
            </div>
            <div class="col-span-5 flex justify-between border-r-2 border-[#ebecf2] px-12 pt-5 leading-9 text-[#6c757d]">
                <span>EC2 - Other</span>
                <span class="text-[23px]">15,931.26$</span>
            </div>
            <div class="col-span-3 border-r-2 border-[#ebecf2] px-12 pt-[30px]">
                <h3 class="text-[25px] leading-9 font-medium">Support</h3>
            </div>
        </section>
    </main>
</div>
</body>
</html>
